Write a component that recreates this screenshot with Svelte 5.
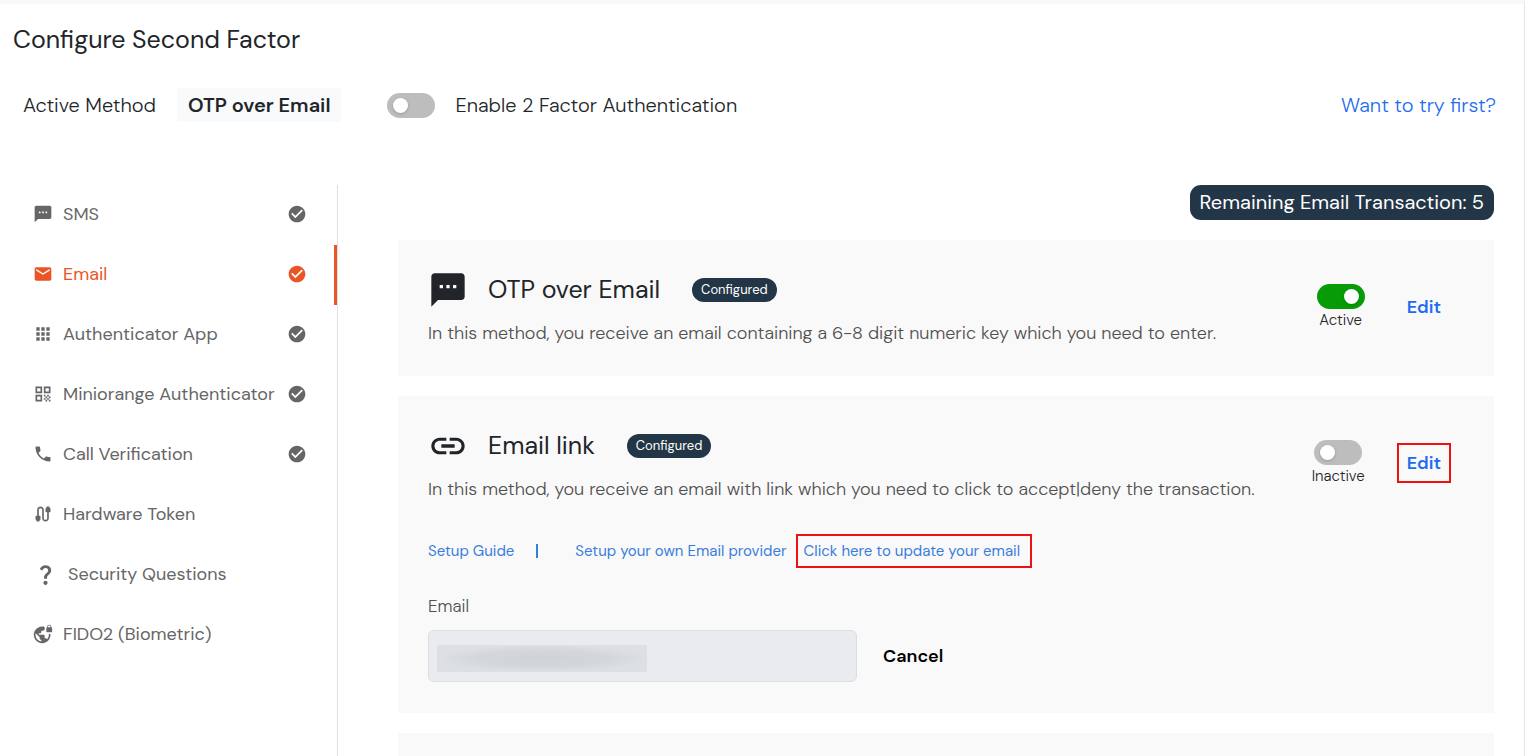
<script>
  let twoFactor = false;
  let otpActive = true;
  let linkActive = false;
  let current = 'Email';

  const methods = [
    { name: 'SMS', icon: 'sms', done: true },
    { name: 'Email', icon: 'mail', done: true },
    { name: 'Authenticator App', icon: 'apps', done: true },
    { name: 'Miniorange Authenticator', icon: 'qr', done: true },
    { name: 'Call Verification', icon: 'phone', done: true },
    { name: 'Hardware Token', icon: 'cable', done: false },
    { name: 'Security Questions', icon: 'question', done: false },
    { name: 'FIDO2 (Biometric)', icon: 'globe', done: false },
  ];

  const icons = {
    sms: 'M20 2H4c-1.1 0-2 .9-2 2v18l4-4h14c1.1 0 2-.9 2-2V4c0-1.1-.9-2-2-2zM9 11H7V9h2v2zm4 0h-2V9h2v2zm4 0h-2V9h2v2z',
    mail: 'M20 4H4c-1.1 0-2 .9-2 2v12c0 1.1.9 2 2 2h16c1.1 0 2-.9 2-2V6c0-1.1-.9-2-2-2zm0 4l-8 5-8-5V6l8 5 8-5v2z',
    apps: 'M4 8h4V4H4v4zm6 12h4v-4h-4v4zm-6 0h4v-4H4v4zm0-6h4v-4H4v4zm6 0h4v-4h-4v4zm6-10v4h4V4h-4zm-6 4h4V4h-4v4zm6 6h4v-4h-4v4zm0 6h4v-4h-4v4z',
    qr: 'M3 11h8V3H3v8zm2-6h4v4H5V5zM3 21h8v-8H3v8zm2-6h4v4H5v-4zM13 3v8h8V3h-8zm6 6h-4V5h4v4zM19 19h2v2h-2zM13 13h2v2h-2zM15 15h2v2h-2zM13 17h2v2h-2zM15 19h2v2h-2zM17 17h2v2h-2zM17 13h2v2h-2zM19 15h2v2h-2z',
    phone: 'M20 15.5c-1.2 0-2.4-.2-3.6-.6-.3-.1-.7 0-1 .2l-2.2 2.2c-2.8-1.4-5.1-3.8-6.6-6.6l2.2-2.2c.3-.3.4-.7.2-1-.3-1.1-.5-2.3-.5-3.5 0-.6-.4-1-1-1H4c-.6 0-1 .4-1 1 0 9.4 7.6 17 17 17 .6 0 1-.4 1-1v-3.500c0-.6-.4-1-1-1z',
    cable: 'M20 5V4c0-.55-.45-1-1-1h-2c-.55 0-1 .45-1 1v1h-1v4c0 .55.45 1 1 1h1v7c0 1.100-.9 2-2 2s-2-.9-2-2V7c0-2.210-1.790-4-4-4S5 4.790 5 7v7H4c-.55 0-1 .45-1 1v4h1v1c0 .55.45 1 1 1h2c.55 0 1-.45 1-1v-1h1v-4c0-.55-.45-1-1-1H7V7c0-1.100.9-2 2-2s2 .9 2 2v10c0 2.210 1.790 4 4 4s4-1.790 4-4v-7h1c.55 0 1-.45 1-1V5h-1z',
    question: 'M11.070 12.850c.77-1.390 2.250-2.210 3.110-3.440.91-1.290.4-3.700-2.180-3.700-1.690 0-2.520 1.280-2.870 2.340L6.540 6.960C7.250 4.830 9.180 3 11.990 3c2.350 0 3.960 1.070 4.780 2.410.7 1.150 1.110 3.300.03 4.900-1.200 1.770-2.350 2.310-2.970 3.450-.25.460-.35.760-.35 2.240h-2.890c-.01-.78-.13-2.050.48-3.150zM14 20c0 1.100-.9 2-2 2s-2-.9-2-2 .9-2 2-2 2 .9 2 2z',
    globe: 'M22 4v-.5C22 2.120 20.880 1 19.500 1S17 2.120 17 3.500V4c-.55 0-1 .45-1 1v4c0 .55.45 1 1 1h5c.55 0 1-.45 1-1V5c0-.55-.45-1-1-1zm-.8 0h-3.400v-.5c0-.94.76-1.700 1.700-1.700s1.700.76 1.700 1.700V4zm-2.280 8c.04.33.08.66.08 1 0 2.080-.8 3.970-2.100 5.390-.26-.81-1-1.390-1.900-1.390h-1v-3c0-.55-.45-1-1-1H7v-2h2c.55 0 1-.45 1-1V8h2c1.100 0 2-.9 2-2V3.460c-.95-.3-1.950-.46-3-.46C5.480 3 1 7.480 1 13s4.480 10 10 10 10-4.480 10-10c0-.34-.02-.67-.05-1h-2.030zM10 20.930c-3.950-.49-7-3.850-7-7.930 0-.62.08-1.210.21-1.790L8 16v1c0 1.100.9 2 2 2v1.930z',
    check: 'M12 2C6.480 2 2 6.480 2 12s4.480 10 10 10 10-4.480 10-10S17.520 2 12 2zm-2 15l-5-5 1.410-1.410L10 14.170l7.590-7.590L19 8l-9 9z',
    link: 'M3.900 12c0-1.710 1.390-3.100 3.100-3.100h4V7H7c-2.760 0-5 2.240-5 5s2.240 5 5 5h4v-1.900H7c-1.710 0-3.100-1.390-3.100-3.100zM8 13h8v-2H8v2zm9-6h-4v1.900h4c1.710 0 3.100 1.390 3.100 3.100s-1.390 3.100-3.100 3.100h-4V17h4c2.760 0 5-2.240 5-5s-2.240-5-5-5z',
  };
</script>

{#snippet icon(name)}
  <svg viewBox="0 0 24 24" aria-hidden="true"><path d={icons[name]} /></svg>
{/snippet}

<div class="page">
  <header>
    <h1>Configure Second Factor</h1>
    <div class="status">
      <span>Active Method</span>
      <strong>OTP over Email</strong>
      <label class="enable">
        <input class="toggle" type="checkbox" bind:checked={twoFactor} />
        Enable 2 Factor Authentication
      </label>
      <a class="try" href="#try">Want to try first?</a>
    </div>
  </header>

  <div class="body">
    <nav>
      {#each methods as method}
        <button
          class="method {method.icon}"
          class:active={method.name === current}
          on:click={() => (current = method.name)}
        >
          <span class="method-icon">{@render icon(method.icon)}</span>
          <span class="method-name">{method.name}</span>
          {#if method.done}
            <span class="done">{@render icon('check')}</span>
          {/if}
        </button>
      {/each}
    </nav>

    <main>
      <div class="remaining">Remaining Email Transaction: 5</div>

      <section class="card">
        <div class="card-head">
          <div class="info">
            <div class="title">
              {@render icon('sms')}
              <h2>OTP over Email</h2>
              <span class="badge">Configured</span>
            </div>
            <p>In this method, you receive an email containing a 6-8 digit numeric key which you need to enter.</p>
          </div>
          <label class="state">
            <input class="toggle" type="checkbox" bind:checked={otpActive} />
            {otpActive ? 'Active' : 'Inactive'}
          </label>
          <button class="edit">Edit</button>
        </div>
      </section>

      <section class="card">
        <div class="card-head">
          <div class="info">
            <div class="title">
              {@render icon('link')}
              <h2>Email link</h2>
              <span class="badge">Configured</span>
            </div>
            <p>In this method, you receive an email with link which you need to click to accept|deny the transaction.</p>
          </div>
          <label class="state">
            <input class="toggle" type="checkbox" bind:checked={linkActive} />
            {linkActive ? 'Active' : 'Inactive'}
          </label>
          <button class="edit marked">Edit</button>
        </div>
        <div class="details">
          <div class="links">
            <a href="#guide">Setup Guide</a>
            <span class="divider"></span>
            <a href="#provider">Setup your own Email provider</a>
            <a class="update marked" href="#update">Click here to update your email</a>
          </div>
          <label class="field-label" for="email">Email</label>
          <div class="field">
            <input id="email" type="email" disabled />
            <button class="cancel">Cancel</button>
          </div>
        </div>
      </section>

      <section class="card next"></section>
    </main>
  </div>
</div>

<style>
  :global(body) {
    margin: 0;
    background: #fff;
  }

  .page {
    box-sizing: border-box;
    min-height: 100vh;
    display: flex;
    flex-direction: column;
    border-top: 4px solid #f9f9f9;
    border-right: 1px solid #e4e4e4;
    font-family: 'DM Sans', Inter, 'Liberation Sans', sans-serif;
    font-size: 18px;
    color: #212529;
  }

  button {
    border: none;
    background: none;
    font-family: inherit;
    cursor: pointer;
  }

  a {
    color: #3b7ddd;
    text-decoration: none;
  }

  svg {
    display: block;
    fill: currentColor;
  }

  header {
    padding: 19px 28px 0 13px;
  }

  h1,
  h2 {
    margin: 0;
    font-size: 25px;
    line-height: 34px;
    font-weight: 400;
  }

  .status {
    display: flex;
    align-items: center;
    margin-top: 31px;
    padding-left: 10px;
    font-size: 20px;
    line-height: 34px;
    font-weight: 300;
    color: #212529;
  }

  .status strong {
    margin-left: 21px;
    padding: 0 11px;
    font-weight: 600;
    background: #f8fafb;
    border-radius: 3px;
  }

  .enable {
    display: flex;
    align-items: center;
    gap: 20px;
    margin-left: 46px;
  }

  .try {
    margin-left: auto;
    color: #1f6cf0;
  }

  .toggle {
    appearance: none;
    flex: none;
    box-sizing: border-box;
    width: 48px;
    height: 25px;
    margin: 0;
    padding: 5px 6px;
    border-radius: 13px;
    background: #bdbdbd;
    cursor: pointer;
  }

  .toggle::before {
    content: '';
    display: block;
    width: 15px;
    height: 15px;
    border-radius: 50%;
    background: #fff;
    box-shadow: 0 1px 3px rgba(0, 0, 0, 0.2);
  }

  .toggle:checked {
    background: #079c07;
  }

  .toggle:checked::before {
    margin-left: auto;
  }

  .body {
    flex: 1;
    display: flex;
    margin-top: 63px;
  }

  nav {
    box-sizing: border-box;
    flex: none;
    width: 338px;
    border-right: 1px solid #dfdfdf;
  }

  .method {
    box-sizing: border-box;
    display: flex;
    align-items: center;
    width: 100%;
    height: 60px;
    padding: 0 27px 2px 33px;
    border-right: 3px solid transparent;
    font-size: 18px;
    color: #666;
  }

  .method-icon {
    width: 20px;
    margin-right: 10px;
  }

  .question .method-icon {
    width: 25px;
  }

  .done {
    width: 20px;
    margin-left: auto;
  }

  .active {
    color: #eb5424;
    border-right-color: #eb5424;
  }

  main {
    flex: 1;
    display: flex;
    flex-direction: column;
    gap: 20px;
    padding: 0 30px 0 60px;
  }

  .remaining {
    align-self: flex-end;
    padding: 0 10px;
    font-size: 20px;
    line-height: 35px;
    color: #fff;
    background: #233647;
    border-radius: 11px;
  }

  .card {
    background: #f9f9f9;
  }

  .card-head {
    display: flex;
    align-items: center;
    padding: 33px 43px 30px 30px;
  }

  .info {
    flex: 1;
  }

  .title {
    display: flex;
    align-items: center;
  }

  .title svg {
    width: 40px;
    height: 40px;
    margin: -3px 20px -3px 0;
  }

  .badge {
    margin-left: 32px;
    padding: 0 9px;
    font-size: 13px;
    line-height: 24px;
    color: #fff;
    background: #233647;
    border-radius: 12px;
  }

  p {
    margin: 14px 0 0;
    line-height: 25px;
    font-weight: 300;
    color: #505050;
  }

  .state {
    display: flex;
    flex-direction: column;
    align-items: center;
    padding-bottom: 4px;
    font-size: 15px;
    line-height: 22px;
    font-weight: 300;
    color: #212529;
  }

  .edit {
    margin: 0 0 6px 32px;
    padding: 8px;
    border: 2px solid transparent;
    font-size: 18px;
    line-height: 20px;
    font-weight: 600;
    color: #1f6cf0;
  }

  .marked {
    border: 2px solid #ee1111;
  }

  .details {
    padding: 0 30px 31px;
  }

  .links {
    display: flex;
    align-items: center;
    margin-top: 2px;
    font-size: 15px;
    line-height: 20px;
  }

  .divider {
    width: 2px;
    height: 14px;
    margin: 0 37px 0 22px;
    background: #3b7ddd;
  }

  .update {
    margin-left: 9px;
    padding: 5px 10px 5px 6px;
  }

  .field-label {
    display: block;
    margin: 26px 0 12px;
    font-size: 17px;
    line-height: 24px;
    font-weight: 300;
    color: #505050;
  }

  .field {
    display: flex;
    align-items: center;
    gap: 20px;
  }

  .field input {
    box-sizing: border-box;
    width: 429px;
    height: 52px;
    border: 1px solid #dcdfe2;
    border-radius: 6px;
    background: #e9ebee radial-gradient(closest-side, #cfd3d5, #d4d7da 60%, #dde0e2) 8px 14px / 210px 27px no-repeat;
  }

  .cancel {
    padding: 8px 6px;
    font-size: 18px;
    font-weight: 600;
    color: #000;
  }

  .next {
    flex: 1;
    min-height: 24px;
  }
</style>
